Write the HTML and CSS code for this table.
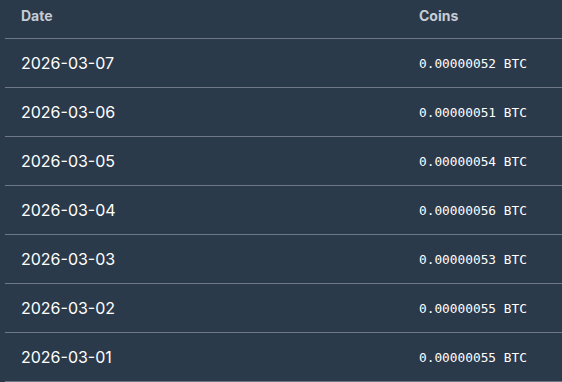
FILE: index.html
```html
<!DOCTYPE html>
<html>
<head>
<meta charset="utf-8">
<title>Payouts</title>
<link rel="stylesheet" href="styles.css">
</head>
<body>
<table class="payouts">
  <thead>
    <tr><th class="date">Date</th><th class="coins">Coins</th></tr>
  </thead>
  <tbody>
    <tr><td class="date">2026-03-07</td><td class="coins">0.00000052 BTC</td></tr>
    <tr><td class="date">2026-03-06</td><td class="coins">0.00000051 BTC</td></tr>
    <tr><td class="date">2026-03-05</td><td class="coins">0.00000054 BTC</td></tr>
    <tr><td class="date">2026-03-04</td><td class="coins">0.00000056 BTC</td></tr>
    <tr><td class="date">2026-03-03</td><td class="coins">0.00000053 BTC</td></tr>
    <tr><td class="date">2026-03-02</td><td class="coins">0.00000055 BTC</td></tr>
    <tr><td class="date">2026-03-01</td><td class="coins">0.00000055 BTC</td></tr>
  </tbody>
</table>
</body>
</html>
```
FILE: styles.css
```css
  html, body {
    margin: 0;
    background: #2b3a4a;
    overflow: hidden;
  }
  body {
    padding-left: 5px;
    font-family: "Inter", "Liberation Sans", sans-serif;
  }
  table.payouts {
    width: calc(100vw - 5px);
    border-collapse: collapse;
  }
  table.payouts th {
    height: 30px;
    padding: 0 16px 8px 16px;
    text-align: left;
    font-size: 14px;
    font-weight: 700;
    color: #c6ccd4;
    border-bottom: 1px solid #6e7785;
  }
  table.payouts td {
    height: 48px;
    padding: 0 16px;
    vertical-align: middle;
    border-bottom: 1px solid #6e7785;
    color: #ffffff;
  }
  th.date, td.date {
    width: 366px;
  }
  td.date {
    font-size: 16px;
  }
  td.coins {
    font-family: "DejaVu Sans Mono", monospace;
    font-size: 12.8px;
    padding-bottom: 5px;
  }
```
